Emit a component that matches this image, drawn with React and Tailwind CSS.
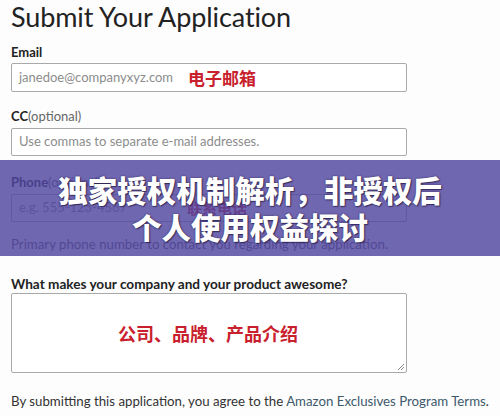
export default function App() {
  const sans = { fontFamily: 'Lato, "Noto Sans CJK SC", sans-serif' };
  const cjk = { fontFamily: '"Noto Sans CJK SC", sans-serif' };
  return (
    <div className="relative w-[500px] h-[416px] overflow-hidden bg-[#fdfdfd] text-[#222]" style={sans}>
      <div className="px-[11px]">
        <h1 className="text-[27px] leading-[34px] font-normal text-[#222] tracking-[-0.1px]">Submit Your Application</h1>

        <div className="mt-[10px] text-[13px] leading-[16px] font-bold">Email</div>
        <div className="mt-[3px] w-[396px] h-[29px] border border-[#a9a9a9] rounded-[2px] bg-white flex items-center pl-[7px]">
          <span className="text-[13px] text-[#8c8c8c] w-[169px]">janedoe@companyxyz.com</span>
          <span className="text-[17px] font-bold text-[#c8202c]" style={cjk}>电子邮箱</span>
        </div>

        <div className="mt-[16px] text-[13px] leading-[16px]"><span className="font-bold">CC</span><span className="text-[#666]">(optional)</span></div>
        <div className="mt-[4px] w-[396px] h-[28px] border border-[#a9a9a9] rounded-[2px] bg-white flex items-center pl-[7px]">
          <span className="text-[13px] text-[#8c8c8c]">Use commas to separate e-mail addresses.</span>
        </div>

        <div className="mt-[18px] text-[13px] leading-[16px]"><span className="font-bold">Phone</span><span className="text-[#666]">(optional)</span></div>
        <div className="mt-[4px] w-[396px] h-[28px] border border-[#a9a9a9] rounded-[2px] bg-white flex items-center pl-[7px]">
          <span className="text-[13px] text-[#8c8c8c] w-[168px]">e.g. 555-123-4567</span>
          <span className="text-[15px] font-bold text-[#c8202c]" style={cjk}>联系电话</span>
        </div>
        <div className="mt-[14px] text-[13.25px] leading-[16px] text-[#555]">Primary phone number to contact you regarding your application.</div>

        <div className="mt-[24px] text-[13.6px] leading-[16px] font-bold">What makes your company and your product awesome?</div>
        <div className="relative mt-[1px] w-[396px] h-[80px] border border-[#a9a9a9] rounded-[2px] bg-white flex items-center justify-center">
          <span className="text-[18px] font-bold text-[#c8202c] -ml-[2px]" style={cjk}>公司、品牌、产品介绍</span>
          <svg className="absolute right-[1px] bottom-[1px]" width="8" height="8" viewBox="0 0 8 8">
            <path d="M7 1 L1 7 M7 4 L4 7" stroke="#888" strokeWidth="1" />
          </svg>
        </div>

        <div className="mt-[20px] text-[13.25px] leading-[17px] text-[#333] whitespace-nowrap">
          By submitting this application, you agree to the <span className="text-[#3d5a6c]">Amazon Exclusives Program Terms</span>.
        </div>
      </div>

      <div className="absolute left-0 right-0 top-[160px] h-[96px] bg-[rgba(80,70,160,0.82)] flex flex-col items-center justify-center">
        <div
          className="text-white font-black text-[29.5px] leading-[37px] text-center"
          style={{ ...cjk, textShadow: '0 0 2px rgba(30,20,60,0.8), 1px 1px 1px rgba(30,20,60,0.6)' }}
        >
          <div>独家授权机制解析，非授权后</div>
          <div>个人使用权益探讨</div>
        </div>
      </div>
    </div>
  );
}
